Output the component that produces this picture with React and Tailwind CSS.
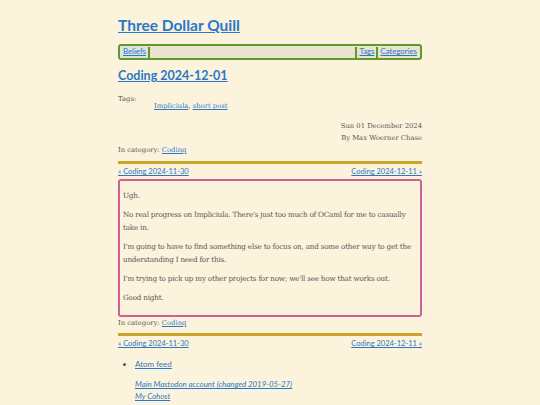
import React from 'react';

const serif = { fontFamily: '"DejaVu Serif", serif' };

function Link({ children, className = '' }) {
  return <a href="#" className={`text-[#2a78c8] underline ${className}`}>{children}</a>;
}

function PrevNext() {
  return (
    <div className="flex justify-between text-[7.5px] font-['Lato',sans-serif] leading-[12px]">
      <Link>« Coding 2024-11-30</Link>
      <Link>Coding 2024-12-11 »</Link>
    </div>
  );
}

export default function App() {
  return (
    <div className="min-h-[405px] bg-[#fcf3dc] text-[#555]">
      <div className="w-[304px] mx-auto pt-[14px]">
        {/* Header */}
        <h1 className="font-['Lato',sans-serif] font-bold text-[15.5px] leading-[22px]">
          <Link className="text-[#1f74c4]">Three Dollar Quill</Link>
        </h1>

        <nav className="mt-[8px] flex items-center h-[16px] border-2 border-[#62992a] rounded-[3px] bg-[#e9e3cf] px-[1px] text-[7.8px] font-['Lato',sans-serif]">
          <Link className="px-[2px] bg-[#dde3e0]">Beliefs</Link>
          <span className="w-[2px] h-[11px] bg-[#62992a]" />
          <span className="flex-1" />
          <span className="w-[2px] h-[11px] bg-[#62992a]" />
          <Link className="px-[2px]">Tags</Link>
          <span className="w-[2px] h-[11px] bg-[#62992a]" />
          <Link className="px-[2px]">Categories</Link>
        </nav>

        {/* Post header */}
        <h2 className="mt-[7px] font-['Lato',sans-serif] font-bold text-[12.5px] leading-[18px]">
          <Link className="text-[#1f74c4]">Coding 2024-12-01</Link>
        </h2>

        <div style={serif} className="text-[6.8px] leading-[12px]">
          <div className="mt-[8px]">Tags:</div>
          <div className="pl-[36px] -mt-[5px]">
            <Link>Impliciula</Link>, <Link>short post</Link>
          </div>
          <div className="mt-[8px] text-right">Sun 01 December 2024</div>
          <div className="text-right">By Max Woerner Chase</div>
          <div>In category: <Link>Coding</Link></div>
        </div>

        <hr className="mt-[5px] border-0 h-[3px] bg-[#c9a52c]" />
        <div className="mt-[2px]">
          <PrevNext />
        </div>

        {/* Article */}
        <article style={serif} className="mt-[1px] border-2 border-[#cf5f9c] rounded-[3px] px-[3px] pt-[8px] pb-[11px] text-[7.2px] tracking-[-0.2px] leading-[13px] space-y-[6px]">
          <p>Ugh.</p>
          <p>No real progress on Impliciula. There's just too much of OCaml for me to casually take in.</p>
          <p>I'm going to have to find something else to focus on, and some other way to get the understanding I need for this.</p>
          <p>I'm trying to pick up my other projects for now; we'll see how that works out.</p>
          <p>Good night.</p>
        </article>

        <div style={serif} className="text-[6.8px] leading-[12px]">
          In category: <Link>Coding</Link>
        </div>

        <hr className="mt-[4px] border-0 h-[3px] bg-[#c9a52c]" />
        <div className="mt-[2px]">
          <PrevNext />
        </div>

        {/* Footer */}
        <ul className="mt-[8px] pl-[17px] list-disc text-[8px] leading-[12px] font-['Lato',sans-serif]">
          <li><Link>Atom feed</Link></li>
        </ul>
        <div className="mt-[8px] pl-[17px] flex flex-col text-[7.9px] leading-[12px] italic font-['Lato',sans-serif]">
          <Link className="self-start">Main Mastodon account (changed 2019-05-27)</Link>
          <Link className="self-start">My Cohost</Link>
        </div>
      </div>
    </div>
  );
}
